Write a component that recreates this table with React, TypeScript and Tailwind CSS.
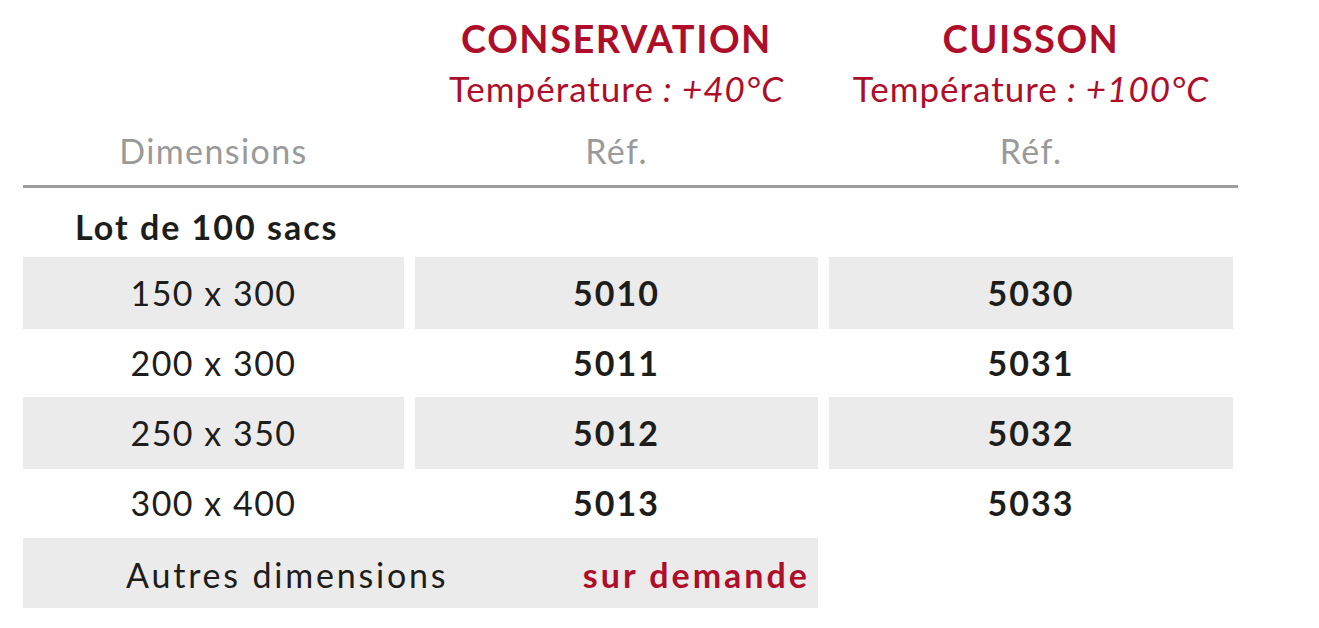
import React from 'react';

const font = { fontFamily: 'Lato, "Open Sans", sans-serif' };

const rows = [
  { dim: '150 x 300', a: '5010', b: '5030' },
  { dim: '200 x 300', a: '5011', b: '5031' },
  { dim: '250 x 350', a: '5012', b: '5032' },
  { dim: '300 x 400', a: '5013', b: '5033' },
];

const grid = 'grid grid-cols-[381px_403px_404px] gap-x-[11px]';

const App = () => {
  return (
    <div className="w-[1319px] h-[628px] bg-white pl-[23px] text-[#1d1d1b]" style={font}>
      {/* Header titles */}
      <div className={`${grid} pt-[13px]`}>
        <div />
        <div className="text-center text-[#ae0e2a]">
          <div className="h-[50px] leading-[50px] text-[38px] font-bold tracking-[1.5px]">CONSERVATION</div>
          <div className="h-[50px] leading-[50px] text-[35px] tracking-[1px]">
            Température<span className="italic"> : +40°C</span>
          </div>
        </div>
        <div className="text-center text-[#ae0e2a]">
          <div className="h-[50px] leading-[50px] text-[38px] font-bold tracking-[1.5px]">CUISSON</div>
          <div className="h-[50px] leading-[50px] text-[35px] tracking-[1px]">
            Température<span className="italic"> : +100°C</span>
          </div>
        </div>
      </div>

      {/* Column labels */}
      <div className={`${grid} mt-[13px] text-[34px] tracking-[1.4px] text-[#9a9a9a]`}>
        <div className="h-[50px] leading-[50px] text-center">Dimensions</div>
        <div className="h-[50px] leading-[50px] text-center">Réf.</div>
        <div className="h-[50px] leading-[50px] text-center">Réf.</div>
      </div>
      <div className="mt-[9px] w-[1215px] h-[3px] bg-[#9d9d9d]" />

      {/* Group label */}
      <div className="mt-[14px] h-[50px] leading-[50px] pl-[52px] text-[34px] font-bold tracking-[2px]">
        Lot de 100 sacs
      </div>

      {/* Rows */}
      <div className="mt-[5px]">
        {rows.map((r, i) => (
          <div key={r.dim} className={`${grid} h-[70px] leading-[72px] text-center text-[34px]`}>
            <div className={`tracking-[1.5px] ${i % 2 === 0 ? 'bg-[#ebebeb]' : ''}`}>{r.dim}</div>
            <div className={`font-bold tracking-[2px] ${i % 2 === 0 ? 'bg-[#ebebeb]' : ''}`}>{r.a}</div>
            <div className={`font-bold tracking-[2px] ${i % 2 === 0 ? 'bg-[#ebebeb]' : ''}`}>{r.b}</div>
          </div>
        ))}
        <div className="mt-[1px] w-[795px] h-[70px] bg-[#ebebeb] flex items-center justify-between pl-[103px] pr-[8px] pt-[2px] text-[34px]">
          <span className="tracking-[2.8px]">Autres dimensions</span>
          <span className="font-bold tracking-[3px] text-[#ae0e2a]">sur demande</span>
        </div>
      </div>
    </div>
  );
};

export default App;
